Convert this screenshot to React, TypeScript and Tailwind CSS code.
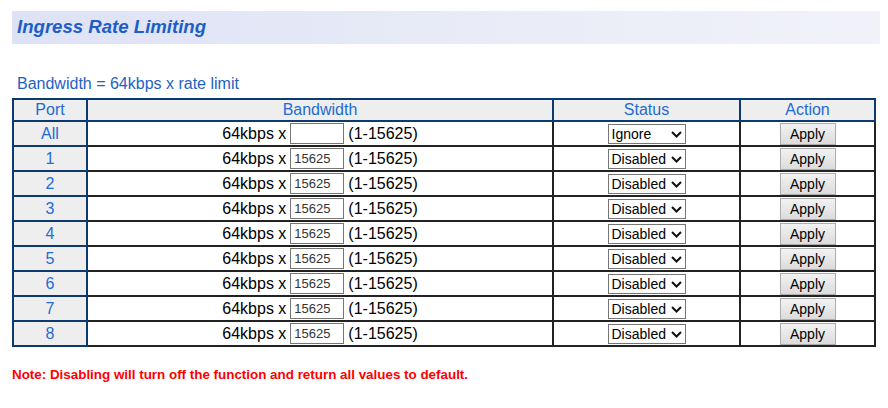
import React from "react"

const rows = ["All", "1", "2", "3", "4", "5", "6", "7", "8"]

export default function App() {
  return (
    <div className="w-[888px] h-[408px] bg-white pt-[11px] pl-[12px] pr-[8px] font-['Liberation_Sans',Arial,sans-serif]">
      {/* page title band */}
      <div className="h-[33px] flex items-center pl-[5px] bg-gradient-to-r from-[#dde2f5] via-[#e8ebf7] to-[#f1f2f9]">
        <h1 className="text-[18.6px] font-bold italic text-[#1b5ec6] leading-none">Ingress Rate Limiting</h1>
      </div>

      <p className="mt-[31px] pl-[5px] text-[16px] leading-[18px] text-[#1e62c4]">Bandwidth = 64kbps x rate limit</p>

      <table className="mt-[5px] w-[862px] table-fixed border-collapse text-[16px]">
        <colgroup>
          <col className="w-[74px]" />
          <col className="w-[466px]" />
          <col className="w-[187px]" />
          <col className="w-[135px]" />
        </colgroup>
        <thead>
          <tr className="bg-[#eeeeee] text-[#1e6ad6]">
            <th className="border-2 border-[#0d3a6e] p-0 font-normal h-[21px] leading-[20px]">Port</th>
            <th className="border-2 border-[#0d3a6e] p-0 font-normal leading-[20px]">Bandwidth</th>
            <th className="border-2 border-[#0d3a6e] p-0 font-normal leading-[20px]">Status</th>
            <th className="border-2 border-[#0d3a6e] p-0 font-normal leading-[20px]">Action</th>
          </tr>
        </thead>
        <tbody>
          {rows.map((port, i) => (
            <tr key={port}>
              <td className="border-2 border-[#0d3a6e] bg-[#eeeeee] p-0 text-center text-[#1e6ad6]">
                <div className="h-[23px] flex items-center justify-center">{port}</div>
              </td>
              <td className="border-2 border-[#222222] p-0">
                <div className="h-[23px] flex items-center justify-center text-black">
                  <span>64kbps x</span>
                  <input
                    type="text"
                    defaultValue={i === 0 ? "" : "15625"}
                    className="ml-[4px] mr-[4px] w-[54px] h-[21px] border border-[#767676] px-[3px] text-[13px] text-[#333] outline-none"
                  />
                  <span>(1-15625)</span>
                </div>
              </td>
              <td className="border-2 border-[#222222] p-0">
                <div className="h-[23px] flex items-center justify-center">
                  <div className="relative w-[78px] h-[20px] border border-[#767676] bg-white flex items-center">
                    <span className="pl-[3px] text-[14px] leading-none text-black">{i === 0 ? "Ignore" : "Disabled"}</span>
                    <svg className="absolute right-[3px] top-[6px] w-[11px] h-[7px]" viewBox="0 0 11 7" fill="none">
                      <path d="M1 1 L5.5 5.5 L10 1" stroke="#111" strokeWidth="2" />
                    </svg>
                  </div>
                </div>
              </td>
              <td className="border-2 border-[#222222] p-0">
                <div className="h-[23px] flex items-center justify-center">
                  <button className="w-[56px] h-[22px] border border-[#adadad] bg-gradient-to-b from-[#f2f2f2] to-[#dcdcdc] text-[14px] text-black leading-none">
                    Apply
                  </button>
                </div>
              </td>
            </tr>
          ))}
        </tbody>
      </table>

      <p className="mt-[20px] text-[13.4px] leading-[15px] font-bold text-[#ff0000]">
        Note: Disabling will turn off the function and return all values to default.
      </p>
    </div>
  )
}
